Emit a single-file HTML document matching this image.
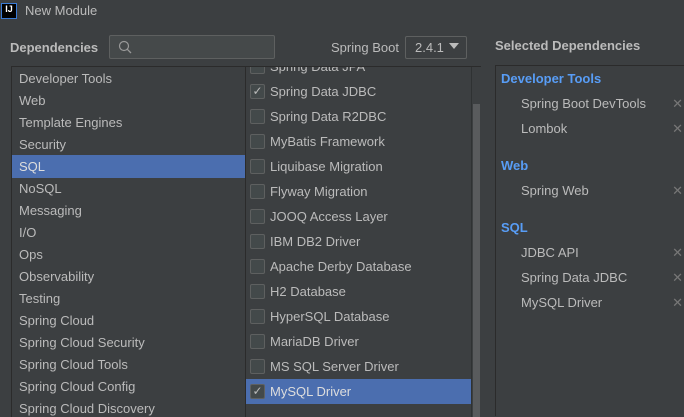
<!DOCTYPE html><html><head><style>
body{margin:0;width:684px;height:408px;background:#3c3f41;font-family:"Liberation Sans",sans-serif;font-size:13px;color:#bbbbbb;position:relative;overflow:hidden}
.a{position:absolute;white-space:nowrap}
.row{position:absolute;left:0;right:0;height:22px;line-height:22px;padding-left:7px}
.mrow{position:absolute;left:0;right:0;height:25px;line-height:25px;padding-left:24px}
.cb{position:absolute;left:4px;top:5px;width:13px;height:13px;border:1px solid #5e6060;background:#43494a;border-radius:2px;font-size:12px;line-height:13px;text-align:center;color:#bbb}
.sel{background:#4b6eaf}
.x{position:absolute;right:2px;color:#777;font-size:13px}
</style></head><body>
<div class="a" style="left:1px;top:3px;width:14px;height:14px;background:#000;border:1px solid #3a7bd5;color:#fff;font-size:9px;font-weight:bold;line-height:11px;text-align:center">IJ</div>
<div class="a" style="left:25px;top:3px;font-size:13px">New Module</div>
<div class="a" style="left:10px;top:40px;font-weight:bold">Dependencies</div>
<div class="a" style="left:109px;top:35px;width:164px;height:22px;border:1px solid #5e6060;background:#45494a;border-radius:2px">
<svg width="14" height="14" style="position:absolute;left:8px;top:4px" viewBox="0 0 14 14"><circle cx="6" cy="6" r="4.5" fill="none" stroke="#999" stroke-width="1.2"/><path d="M9.3 9.3L13 13" stroke="#999" stroke-width="1.3"/></svg></div>
<div class="a" style="left:331px;top:40px">Spring Boot</div>
<div class="a" style="left:405px;top:36px;width:60px;height:21px;border:1px solid #5e6060;border-radius:2px;background:#3c3f41"><span style="position:absolute;left:9px;top:3px">2.4.1</span><span style="position:absolute;left:43px;top:6px;border-left:5px solid transparent;border-right:5px solid transparent;border-top:6px solid #bbb"></span></div>
<div class="a" style="left:11px;top:66px;width:234px;height:350px;border-left:1px solid #2b2b2b;border-top:1px solid #2b2b2b;overflow:hidden">
<div class="row" style="top:1px">Developer Tools</div>
<div class="row" style="top:23px">Web</div>
<div class="row" style="top:45px">Template Engines</div>
<div class="row" style="top:67px">Security</div>
<div class="row sel" style="top:88px;height:23px;line-height:24px;color:#ddd">SQL</div>
<div class="row" style="top:111px">NoSQL</div>
<div class="row" style="top:133px">Messaging</div>
<div class="row" style="top:155px">I/O</div>
<div class="row" style="top:177px">Ops</div>
<div class="row" style="top:199px">Observability</div>
<div class="row" style="top:221px">Testing</div>
<div class="row" style="top:243px">Spring Cloud</div>
<div class="row" style="top:265px">Spring Cloud Security</div>
<div class="row" style="top:287px">Spring Cloud Tools</div>
<div class="row" style="top:309px">Spring Cloud Config</div>
<div class="row" style="top:331px">Spring Cloud Discovery</div>
</div>
<div class="a" style="left:245px;top:66px;width:235px;height:350px;border-left:1px solid #2b2b2b;border-top:1px solid #2b2b2b;overflow:hidden">
<div class="mrow" style="top:-13px"><span class="cb"></span>Spring Data JPA</div>
<div class="mrow" style="top:12px"><span class="cb">✓</span>Spring Data JDBC</div>
<div class="mrow" style="top:37px"><span class="cb"></span>Spring Data R2DBC</div>
<div class="mrow" style="top:62px"><span class="cb"></span>MyBatis Framework</div>
<div class="mrow" style="top:87px"><span class="cb"></span>Liquibase Migration</div>
<div class="mrow" style="top:112px"><span class="cb"></span>Flyway Migration</div>
<div class="mrow" style="top:137px"><span class="cb"></span>JOOQ Access Layer</div>
<div class="mrow" style="top:162px"><span class="cb"></span>IBM DB2 Driver</div>
<div class="mrow" style="top:187px"><span class="cb"></span>Apache Derby Database</div>
<div class="mrow" style="top:212px"><span class="cb"></span>H2 Database</div>
<div class="mrow" style="top:237px"><span class="cb"></span>HyperSQL Database</div>
<div class="mrow" style="top:262px"><span class="cb"></span>MariaDB Driver</div>
<div class="mrow" style="top:287px"><span class="cb"></span>MS SQL Server Driver</div>
<div class="mrow sel" style="top:312px;right:10px;color:#ddd"><span class="cb">✓</span>MySQL Driver</div>
<div class="a" style="left:225px;top:0;width:10px;height:350px;background:#3c3f41;border-left:1px solid #2f3233"></div>
<div class="a" style="left:227px;top:37px;width:7px;height:320px;background:#595b5d"></div>
</div>
<div class="a" style="left:495px;top:38px;font-weight:bold">Selected Dependencies</div>
<div class="a" style="left:495px;top:65px;width:189px;height:350px;border-left:1px solid #2b2b2b;border-top:1px solid #2b2b2b">
<div class="a" style="left:5px;top:5px;font-weight:bold;color:#589df6">Developer Tools</div>
<div class="a" style="left:25px;top:30px;width:164px">Spring Boot DevTools<span class="x">✕</span></div>
<div class="a" style="left:25px;top:55px;width:164px">Lombok<span class="x">✕</span></div>
<div class="a" style="left:5px;top:92px;font-weight:bold;color:#589df6">Web</div>
<div class="a" style="left:25px;top:117px;width:164px">Spring Web<span class="x">✕</span></div>
<div class="a" style="left:5px;top:154px;font-weight:bold;color:#589df6">SQL</div>
<div class="a" style="left:25px;top:179px;width:164px">JDBC API<span class="x">✕</span></div>
<div class="a" style="left:25px;top:204px;width:164px">Spring Data JDBC<span class="x">✕</span></div>
<div class="a" style="left:25px;top:229px;width:164px">MySQL Driver<span class="x">✕</span></div>
</div>
</body></html>
